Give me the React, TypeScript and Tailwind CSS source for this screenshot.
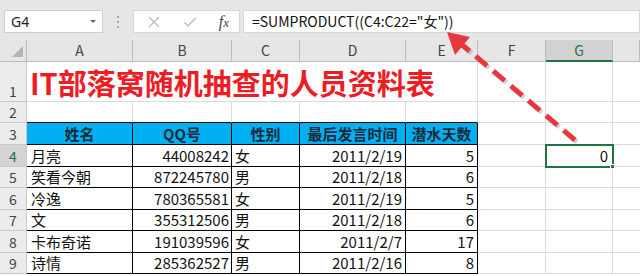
import React from "react";

const cols = ["A", "B", "C", "D", "E", "F", "G", ""];
const gridCols = "grid-cols-[27px_106px_99px_68px_106px_72px_68px_67px_1fr]";

const rows = [
  { n: 4, name: "月亮", qq: "44008242", sex: "女", date: "2011/2/19", days: "5" },
  { n: 5, name: "笑看今朝", qq: "872245780", sex: "男", date: "2011/2/18", days: "6" },
  { n: 6, name: "冷逸", qq: "780365581", sex: "女", date: "2011/2/19", days: "5" },
  { n: 7, name: "文", qq: "355312506", sex: "男", date: "2011/2/18", days: "6" },
  { n: 8, name: "卡布奇诺", qq: "191039596", sex: "女", date: "2011/2/7", days: "17" },
  { n: 9, name: "诗情", qq: "285362527", sex: "男", date: "2011/2/16", days: "8" },
];

const font = "font-['Noto_Sans_CJK_SC',sans-serif]";

const RowHead = ({ n, h, active }: { n: number; h: string; active?: boolean }) => (
  <div
    className={`${h} flex items-end justify-center pb-[1px] border-r border-b border-[#c8c8c8] text-[14px] leading-none ${
      active ? "bg-[#d4d4d4] text-[#217346]" : "bg-[#ececec] text-[#444]"
    }`}
  >
    <span className="pb-[2px]">{n}</span>
  </div>
);

const Empty = ({ h, extra = "" }: { h: string; extra?: string }) => (
  <div className={`${h} border-r border-b border-[#dadada] ${extra}`} />
);

export default function App() {
  return (
    <div className={`relative w-[640px] h-[276px] overflow-hidden bg-white ${font}`}>
      {/* formula bar */}
      <div className="h-[40px] bg-[#e6e6e6] flex items-start pt-[10px] pl-[4px]">
        <div className="w-[99px] h-[23px] bg-white border border-[#cfcfcf] flex items-center justify-between pl-[6px] pr-[6px] font-['Noto_Sans',sans-serif] text-[14px] text-[#222]">
          <span>G4</span>
          <span className="w-0 h-0 border-l-[3px] border-r-[3px] border-t-[3px] border-l-transparent border-r-transparent border-t-[#666]" />
        </div>
        <div className="w-[30px] h-[23px] flex flex-col items-center justify-center gap-[3px]">
          <span className="w-[2px] h-[2px] bg-[#aaa]" />
          <span className="w-[2px] h-[2px] bg-[#aaa]" />
          <span className="w-[2px] h-[2px] bg-[#aaa]" />
        </div>
        <div className="w-[107px] h-[23px] bg-white border border-[#d8d8d8] flex items-center pl-[12px] pr-[10px]">
          <svg width="14" height="14" viewBox="0 0 14 14" className="ml-[1px]">
            <path d="M2 2 L12 12 M12 2 L2 12" stroke="#bdbdbd" strokeWidth="1.3" />
          </svg>
          <svg width="14" height="14" viewBox="0 0 14 14" className="ml-[22px]">
            <path d="M1.5 7.5 L5 11 L12.5 3" stroke="#bdbdbd" strokeWidth="1.5" fill="none" />
          </svg>
          <span className="ml-auto font-['Liberation_Serif',serif] italic text-[16px] text-[#444] leading-none">
            f<span className="text-[13px]">x</span>
          </span>
        </div>
        <div className="ml-[3px] flex-1 h-[23px] bg-white border border-[#d8d8d8] flex items-center pl-[8px] text-[14px] text-[#111]">
          {'=SUMPRODUCT((C4:C22="女"))'}
        </div>
      </div>

      {/* sheet grid */}
      <div className={`grid ${gridCols}`}>
        {/* column headers */}
        <div className="h-[22px] bg-[#e6e6e6] border-r border-b border-[#bdbdbd] flex items-end justify-end pr-[3px] pb-[4px]">
          <svg width="11" height="11" viewBox="0 0 11 11">
            <polygon points="11,0 11,11 0,11" fill="#b4b4b4" />
          </svg>
        </div>
        {cols.map((c, i) => (
          <div
            key={i}
            className={`h-[22px] flex items-center justify-center text-[14px] ${
              c === "G"
                ? "bg-[#d2d2d2] text-[#217346] border-b-2 border-b-[#217346] border-r border-r-[#bdbdbd]"
                : "bg-[#e6e6e6] text-[#444] border-r border-b border-[#bdbdbd]"
            }`}
          >
            {c}
          </div>
        ))}

        {/* row 1 */}
        <RowHead n={1} h="h-[40px]" />
        <div className="col-span-5 h-[40px] border-r border-b border-[#dadada] flex items-center pl-[3px] pt-[2px] whitespace-nowrap font-bold text-[29px] leading-none text-[#ee1c25]">
          IT部落窝随机抽查的人员资料表
        </div>
        <Empty h="h-[40px]" />
        <Empty h="h-[40px]" />
        <Empty h="h-[40px]" extra="border-r-0" />

        {/* row 2 */}
        <RowHead n={2} h="h-[21px]" />
        {[0, 1, 2, 3, 4].map((i) => (
          <Empty key={i} h="h-[21px]" extra="border-b-black" />
        ))}
        <Empty h="h-[21px]" />
        <Empty h="h-[21px]" />
        <Empty h="h-[21px]" extra="border-r-0" />

        {/* row 3 header */}
        <RowHead n={3} h="h-[22px]" />
        {["姓名", "QQ号", "性别", "最后发言时间", "潜水天数"].map((t) => (
          <div
            key={t}
            className="h-[22px] bg-[#00b0f0] border-r border-b border-black flex items-end justify-center pb-[1px] text-[15px] leading-[19px] font-bold text-[#1a2a3a]"
          >
            {t}
          </div>
        ))}
        <Empty h="h-[22px]" />
        <Empty h="h-[22px]" />
        <Empty h="h-[22px]" extra="border-r-0" />

        {rows.map((r, idx) => {
          const h = idx % 2 === 0 ? "h-[22px]" : "h-[21px]";
          const cell = `${h} border-r border-b border-black flex items-end pb-[1px] text-[15px] leading-[19px] text-[#111]`;
          return (
            <React.Fragment key={r.n}>
              <RowHead n={r.n} h={h} active={r.n === 4} />
              <div className={`${cell} pl-[4px]`}>{r.name}</div>
              <div className={`${cell} justify-end pr-[2px]`}>{r.qq}</div>
              <div className={`${cell} pl-[3px]`}>{r.sex}</div>
              <div className={`${cell} justify-end pr-[3px]`}>{r.date}</div>
              <div className={`${cell} justify-end pr-[3px]`}>{r.days}</div>
              <Empty h={h} />
              {r.n === 4 ? (
                <div
                  className={`${h} relative border-r border-b border-[#dadada] outline-2 outline-solid outline-[#217346] -outline-offset-1 flex items-end justify-end pr-[4px] pb-[1px] text-[15px] leading-[19px] text-[#111]`}
                >
                  0
                  <span className="absolute right-[-3px] bottom-[-3px] w-[5px] h-[5px] bg-[#217346] border border-white" />
                </div>
              ) : (
                <Empty h={h} />
              )}
              <Empty h={h} extra="border-r-0" />
            </React.Fragment>
          );
        })}
      </div>

      {/* red dashed arrow overlay */}
      <svg className="absolute inset-0 pointer-events-none" width="640" height="276" viewBox="0 0 640 276">
        <g transform="translate(2,2)" opacity="0.25">
          <line x1="575" y1="140" x2="460" y2="43" stroke="#555" strokeWidth="5" strokeDasharray="15 8" />
        </g>
        <line x1="575" y1="140" x2="460" y2="43" stroke="#e8383d" strokeWidth="5" strokeDasharray="15 8" strokeLinecap="butt" />
        <polygon points="447,32 470,37 455,55" fill="#e8383d" />
      </svg>
    </div>
  );
}
